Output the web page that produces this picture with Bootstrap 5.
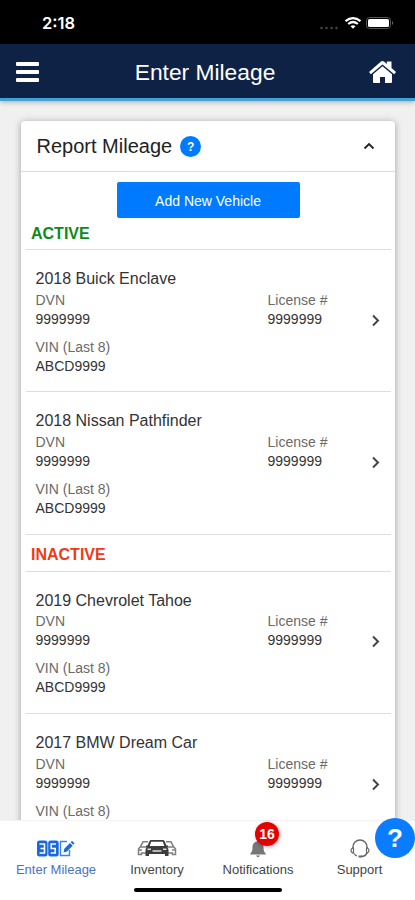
<!DOCTYPE html>
<html lang="en">
<head>
<meta charset="utf-8">
<meta name="viewport" content="width=device-width, initial-scale=1">
<title>Enter Mileage</title>
<link href="https://cdn.jsdelivr.net/npm/bootstrap@5.3.0/dist/css/bootstrap.min.css" rel="stylesheet">
<style>
body{font-family:"Liberation Sans",Arial,sans-serif;background:#f0f0f0;color:#333;height:900px}
.screen{height:900px}
.status-bar{height:44px;padding:3px 19px 0 42px;background:#000;color:#fff}
.clock{font:600 16.5px/1 Inter,sans-serif}
.app-bar{height:57px;padding:2px 19px 0 16px;background:#0e2245;color:#fff;border-bottom:3px solid #45a0d3;box-shadow:0 1px 5px rgba(0,0,0,.3)}
.app-title{font-size:22.8px;line-height:1;padding-left:2px}
.feed{padding:20px 20px 0 21px}
.panel{border-radius:4px;box-shadow:0 1px 7px rgba(0,0,0,.34);height:760px}
.panel-head{height:51px;padding:0 20px 0 15.5px;border-bottom:1px solid #dedede}
.panel-title{font-size:20px;line-height:1;color:#222}
.help-dot{width:21px;height:21px;font-size:12px;background:#007bff;margin-left:8px;margin-top:1px}
.add-btn{width:183px;height:36px;background:#007bff;font-size:14px;line-height:1;border:0;border-radius:2px;margin-top:10px;margin-right:1px;padding-top:1px!important}
.group-body{padding:0 4px 0 5px}
.group-title{font-size:16px;font-weight:700;line-height:1;padding-left:5px;border-bottom:1px solid #dedede}
.t-active{height:32px;padding-top:8px;color:#0c8c16}
.t-inactive{height:37px;padding-top:12px;color:#f03a17}
.vehicle{height:142.4px;padding:18px 10px 0 9.5px;border-bottom:1px solid #dedede;font-size:14px;line-height:19px}
.vehicle-name{font-size:16px;line-height:21px;margin-bottom:1.7px}
.lbl{color:#6a6a6a}
.col-a{width:232px}
.go{margin-top:21px}
.gap-vin{margin-top:9px}
.tab-bar{height:80px;background:#fff;border-top:1px solid #f3f3f3}
.tab{font-size:13px;line-height:15px;color:#444;padding-top:16px}
.tab svg{height:24px;margin-bottom:1px}
.tab.on{color:#4a74c4}
.w-side{width:112px}
.w-car{width:90px}
.home-line{width:148px;height:4px;background:#000;border-radius:2px;left:134px;bottom:8px}
.count{width:24px;height:24px;background:#e60000;font-size:14px;font-weight:700;left:255px;top:1px;box-shadow:1px 1px 4px rgba(0,0,0,.3)}
.fab{width:40px;height:40px;background:#0a7cff;font-size:26px;font-weight:700;left:375px;top:-3px}
</style>
</head>
<body>
<div class="screen d-flex flex-column overflow-hidden">
<div class="status-bar d-flex align-items-center justify-content-between flex-shrink-0">
<span class="clock">2:18</span>
<svg width="82" height="16" viewBox="0 0 82 16" fill="#fff"><g fill="#444"><circle cx="7.5" cy="12" r="1.3"/><circle cx="12.5" cy="12" r="1.3"/><circle cx="17.5" cy="12" r="1.3"/><circle cx="22.5" cy="12" r="1.3"/></g><g fill="none" stroke="#fff" stroke-width="2.2"><path d="M31.5 5.200q7.500-6.300 15 0M34.200 8q4.800-4 9.600 0"/></g><path d="M36.500 10.300q2.500-2 5 0L39 12.700z"/><rect x="52.500" y="1.500" width="24" height="11" rx="3" fill="none" stroke="#555"/><rect x="54" y="3" width="21" height="8" rx="1.500"/><path d="M78 5q2.500 2 0 4z" fill="#666"/></svg>
</div>
<header class="app-bar d-flex align-items-center justify-content-between flex-shrink-0">
<svg width="23" height="20" viewBox="0 0 23 20" fill="#fff"><rect width="23" height="4" rx="1"/><rect y="8" width="23" height="4" rx="1"/><rect y="16" width="23" height="4" rx="1"/></svg>
<span class="app-title">Enter Mileage</span>
<svg width="27" height="24" viewBox="0 0 27 24" fill="#fff"><path d="M12 1.600q1.500-1.200 3 0l2.800 2.400V1.500h4.700V8L27 12l-1.800 2.200L13.500 4.500 1.800 14.200 0 12z"/><path d="M13.500 6.300 23 14.200V22q0 1-1 1h-6v-6h-5v6H5q-1 0-1-1v-7.800z"/></svg>
</header>
<main class="feed flex-grow-1 overflow-hidden">
<section class="panel bg-white">
<div class="panel-head d-flex align-items-center">
<span class="panel-title">Report Mileage</span>
<span class="help-dot rounded-circle text-white fw-bold d-flex align-items-center justify-content-center">?</span>
<svg class="ms-auto" width="12" height="8" viewBox="0 0 12 8" fill="none" stroke="#222" stroke-width="1.800"><path d="M1.500 6.500 6 2l4.500 4.500"/></svg>
</div>
<div class="group-body">
<div class="d-flex justify-content-center"><button class="add-btn btn btn-primary p-0">Add New Vehicle</button></div>
<div class="group-title t-active">ACTIVE</div>
<div class="vehicle"><div class="vehicle-name">2018 Buick Enclave</div><div class="d-flex align-items-center"><div class="col-a"><div class="lbl">DVN</div><div>9999999</div></div><div><div class="lbl">License #</div><div>9999999</div></div><svg class="ms-auto go" width="10" height="13" viewBox="0 0 10 13" fill="none" stroke="#444" stroke-width="2"><path d="m2 1.500 5 5-5 5"/></svg></div><div class="lbl gap-vin">VIN (Last 8)</div><div>ABCD9999</div></div>
<div class="vehicle"><div class="vehicle-name">2018 Nissan Pathfinder</div><div class="d-flex align-items-center"><div class="col-a"><div class="lbl">DVN</div><div>9999999</div></div><div><div class="lbl">License #</div><div>9999999</div></div><svg class="ms-auto go" width="10" height="13" viewBox="0 0 10 13" fill="none" stroke="#444" stroke-width="2"><path d="m2 1.500 5 5-5 5"/></svg></div><div class="lbl gap-vin">VIN (Last 8)</div><div>ABCD9999</div></div>
<div class="group-title t-inactive">INACTIVE</div>
<div class="vehicle"><div class="vehicle-name">2019 Chevrolet Tahoe</div><div class="d-flex align-items-center"><div class="col-a"><div class="lbl">DVN</div><div>9999999</div></div><div><div class="lbl">License #</div><div>9999999</div></div><svg class="ms-auto go" width="10" height="13" viewBox="0 0 10 13" fill="none" stroke="#444" stroke-width="2"><path d="m2 1.500 5 5-5 5"/></svg></div><div class="lbl gap-vin">VIN (Last 8)</div><div>ABCD9999</div></div>
<div class="vehicle border-0"><div class="vehicle-name">2017 BMW Dream Car</div><div class="d-flex align-items-center"><div class="col-a"><div class="lbl">DVN</div><div>9999999</div></div><div><div class="lbl">License #</div><div>9999999</div></div><svg class="ms-auto go" width="10" height="13" viewBox="0 0 10 13" fill="none" stroke="#444" stroke-width="2"><path d="m2 1.500 5 5-5 5"/></svg></div><div class="lbl gap-vin">VIN (Last 8)</div></div>
</div>
</section>
</main>
<nav class="tab-bar position-relative flex-shrink-0">
<div class="d-flex">
<div class="tab on w-side d-flex flex-column align-items-center"><svg width="38" viewBox="0 0 38 24"><g fill="#1769e0"><rect y="3.500" width="10.500" height="16" rx="2.500"/><rect x="11.200" y="3.500" width="10.500" height="16" rx="2.500"/></g><path d="M2.500 7H7.500v9H2.500M3.500 11.500H7.500M19 7H14.200v4.500h4V16h-4.500" fill="none" stroke="#fff" stroke-width="1.500"/><path d="M30 4.500h-6.500v14h9V13" fill="none" stroke="#3f80e4" stroke-width="1.400"/><path d="m26.500 15.500.8-3.800 5.700-5.700 2.700 2.700-5.700 5.700zM33.700 5.200l1.300-1.400 2.500 2.500-1.200 1.400z" fill="#1769e0"/></svg><span>Enter Mileage</span></div>
<div class="tab w-car d-flex flex-column align-items-center"><svg width="40" viewBox="0 0 40 24"><g fill="none" stroke="#808080" stroke-width="1.500"><path d="M11 4.800H6L3.500 9.500 1.500 12v5.500h3V16H10M3.500 10H9M2 13h3M29 4.800h5l2.500 4.700 2 2.500v5.500h-3V16H30M36.500 10H31M38 13h-3"/></g><path d="M14 3h12q1 0 1.500 1l2 4.500h1.500v1.500l-.5.500q1 1 1 2.500v6h-3.500v-2H12v2H8.500v-6q0-1.500 1-2.500L9 10V8.500h1.500l2-4.500q.5-1 1.500-1zM14.200 4.800 12.700 9h14.600l-1.500-4.200z" fill="#3d3d3d" fill-rule="evenodd"/><path d="M10.500 12.300h3.500M26 12.300h3.500M15.500 14h9" stroke="#ddd" stroke-width="1.500"/></svg><span>Inventory</span></div>
<div class="tab w-side d-flex flex-column align-items-center"><svg width="16" viewBox="0 0 16 24" fill="#777"><path d="M7 3h2v1.500c3.200.7 4.500 3 4.500 5.500 0 3.500.5 5 2.200 6.500v1H.3v-1C2 15 2.500 13.500 2.500 10c0-2.500 1.300-4.800 4.500-5.500zM6 18.500h4q-2 3.500-4 0z"/></svg><span>Notifications</span></div>
<div class="tab d-flex flex-column align-items-center" style="width:91px"><svg width="20" viewBox="0 0 20 24" fill="none" stroke="#666" stroke-width="1.400"><path d="M3 11V10a7 7 0 0 1 14 0v1M17 15.500q-1 4-6 4"/><path d="M2.500 11q-3 2.500 0 5l1-.3v-4.400zM17.500 11q3 2.500 0 5l-1-.3v-4.400zM4 16.500q1 1.700 3 2.500" stroke-width="1.200"/><path d="M8.500 19.500h3.500" stroke-width="2"/></svg><span>Support</span></div>
</div>
<span class="count position-absolute rounded-circle text-white d-flex align-items-center justify-content-center">16</span>
<span class="fab position-absolute rounded-circle text-white d-flex align-items-center justify-content-center">?</span>
<div class="home-line position-absolute"></div>
</nav>
</div>
<script src="https://cdn.jsdelivr.net/npm/bootstrap@5.3.0/dist/js/bootstrap.bundle.min.js"></script>
</body>
</html>
